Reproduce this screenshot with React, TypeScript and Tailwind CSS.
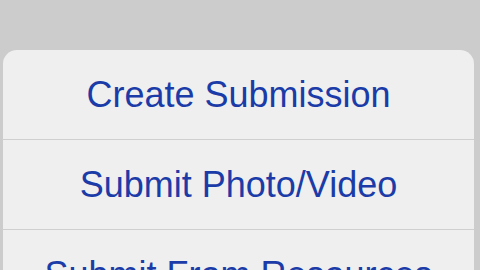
import React from 'react';

const actions = ['Create Submission', 'Submit Photo/Video', 'Submit From Resources'];

const App = () => {
  return (
    <div className="w-[480px] h-[270px] overflow-hidden bg-[#cccccc] pt-[50px] pl-[3px] pr-[6px]">
      <div
        className="bg-[#efefef] rounded-t-[14px] overflow-hidden"
        style={{ fontFamily: '"Liberation Sans", Arial, sans-serif' }}
      >
        {actions.map((label, i) => (
          <div
            key={label}
            className={`h-[90px] flex items-center justify-center ${i < actions.length - 1 ? 'border-b border-[#cfcfcf]' : ''}`}
          >
            <span className="text-[36px] leading-none text-[#1b3ca8] whitespace-nowrap">{label}</span>
          </div>
        ))}
      </div>
    </div>
  );
};

export default App;
